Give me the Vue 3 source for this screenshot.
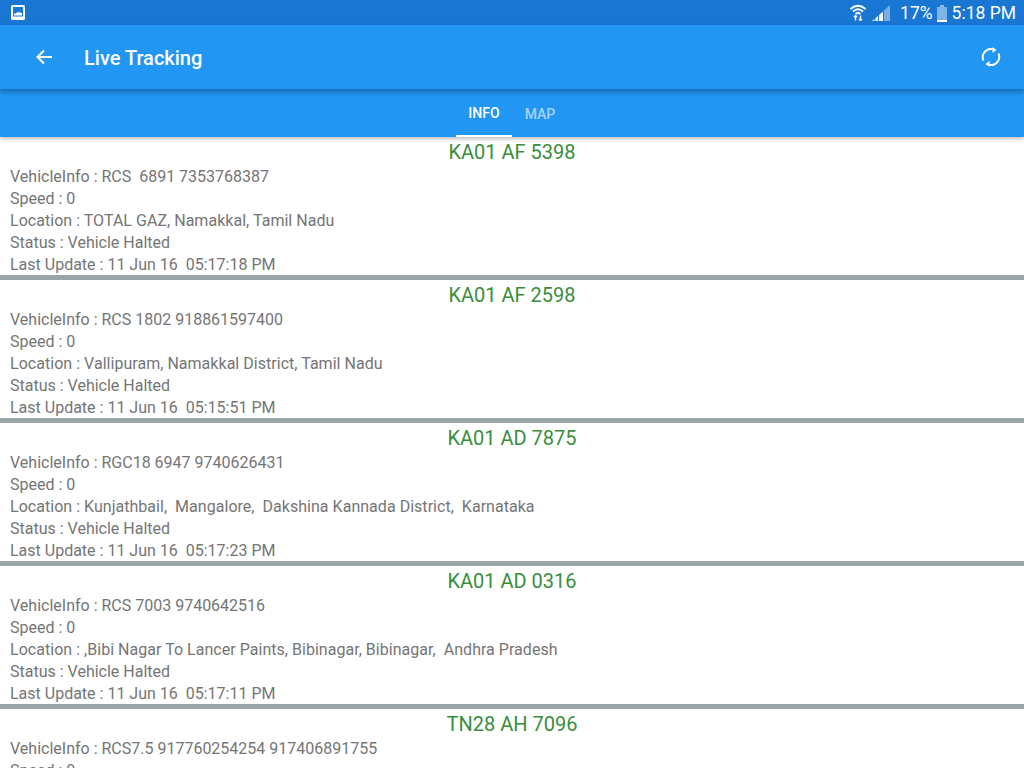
<script setup>
const vehicles = [
  { plate: 'KA01 AF 5398', info: 'RCS  6891 7353768387', location: 'TOTAL GAZ, Namakkal, Tamil Nadu', update: '11 Jun 16  05:17:18 PM' },
  { plate: 'KA01 AF 2598', info: 'RCS 1802 918861597400', location: 'Vallipuram, Namakkal District, Tamil Nadu', update: '11 Jun 16  05:15:51 PM' },
  { plate: 'KA01 AD 7875', info: 'RGC18 6947 9740626431', location: 'Kunjathbail,  Mangalore,  Dakshina Kannada District,  Karnataka', update: '11 Jun 16  05:17:23 PM' },
  { plate: 'KA01 AD 0316', info: 'RCS 7003 9740642516', location: ',Bibi Nagar To Lancer Paints, Bibinagar, Bibinagar,  Andhra Pradesh', update: '11 Jun 16  05:17:11 PM' },
  { plate: 'TN28 AH 7096', info: 'RCS7.5 917760254254 917406891755', location: '', update: '' }
]
</script>

<template>
  <div class="screen">
    <div class="status">
      <svg class="img-icon" width="14" height="15" viewBox="0 0 14 15">
        <rect x="0" y="0" width="14" height="15" rx="1.5" fill="#fff" />
        <rect x="2" y="2" width="10" height="9.5" fill="#1976d2" />
        <path d="M3 10.5 L3 8.5 L5 8.5 L6 7 L7 8 L8 6.5 L9 7.5 L11 8 L11 10.5 Z" fill="#fff" />
      </svg>
      <div class="status-right">
        <svg class="wifi" width="16" height="17" viewBox="0 0 16 17" fill="none" stroke="#fff" stroke-width="1.9">
          <path d="M0.5 5 Q8 -1.5 15.5 5" />
          <path d="M3 7.5 Q8 3 13 7.5" />
          <path d="M5.5 10 Q8 8 10.5 10" />
          <path d="M5.5 11.5 V16.5 M4 13 L5.5 11.5 L7 13 M10.5 16.5 V11.5 M9 15 L10.5 16.5 L12 15" stroke-width="1.4" />
        </svg>
        <svg class="signal" width="18" height="16" viewBox="0 0 18 16">
          <path d="M12 5.5 L18 0 L18 16 L12 16 Z" fill="#fff" fill-opacity="0.42" />
          <path d="M7 10 L11 6.5 L11 16 L7 16 Z" fill="#fff" fill-opacity="0.95" />
          <path d="M3.5 13 L6 11 L6 16 L3.5 16 Z" fill="#fff" />
          <path d="M0 16 L2.5 14 L2.5 16 Z" fill="#fff" />
        </svg>
        <span class="pct">17%</span>
        <svg class="battery" width="10" height="17" viewBox="0 0 10 17">
          <rect x="3" y="0" width="4" height="2" fill="#fff" fill-opacity="0.5" />
          <rect x="0" y="2" width="10" height="13" fill="#fff" fill-opacity="0.45" />
          <rect x="0" y="15" width="10" height="2" fill="#fff" />
        </svg>
        <span class="time">5:18 PM</span>
      </div>
    </div>

    <header class="appbar">
      <svg class="back" width="16" height="16" viewBox="0 0 16 16" fill="none" stroke="#fff" stroke-width="2">
        <path d="M16 8 H1.5 M8 1.5 L1.5 8 L8 14.5" />
      </svg>
      <h1 class="title">Live Tracking</h1>
      <svg class="refresh" width="20" height="20" viewBox="0 0 20 20" fill="none" stroke="#fff" stroke-width="2">
        <path d="M2.5 13.5 A8.2 8.2 0 0 1 12 2.2" />
        <path d="M17.5 6.5 A8.2 8.2 0 0 1 8 17.8" />
        <path d="M11.5 0 L15.5 3 L11.5 6 Z" fill="#fff" stroke="none" />
        <path d="M8.5 14 L4.5 17 L8.5 20 Z" fill="#fff" stroke="none" />
      </svg>
    </header>

    <nav class="tabs">
      <div class="tab active">INFO</div>
      <div class="tab">MAP</div>
    </nav>

    <main class="list">
      <section v-for="v in vehicles" :key="v.plate" class="card">
        <div class="plate">{{ v.plate }}</div>
        <div class="line">VehicleInfo : {{ v.info }}</div>
        <div class="line">Speed : 0</div>
        <template v-if="v.location">
          <div class="line loc">Location : {{ v.location }}</div>
          <div class="line">Status : Vehicle Halted</div>
          <div class="line">Last Update : {{ v.update }}</div>
        </template>
      </section>
    </main>
  </div>
</template>

<style scoped>
.screen {
  width: 1024px;
  height: 768px;
  overflow: hidden;
  background: #fff;
  font-family: Roboto, "Liberation Sans", sans-serif;
  display: flex;
  flex-direction: column;
}
.status {
  height: 25px;
  flex: none;
  background: #1976d2;
  color: #fff;
  display: flex;
  align-items: center;
  justify-content: space-between;
  padding: 0 8px 0 11px;
  box-sizing: border-box;
}
.status-right {
  display: flex;
  align-items: center;
}
.wifi { margin-right: 6px; }
.signal { margin-right: 10px; margin-top: 1px; }
.pct { font-size: 17.5px; margin-right: 4px; }
.battery { margin-right: 5px; margin-top: 1px; }
.time { font-size: 17.5px; }
.appbar {
  height: 64px;
  flex: none;
  background: #2196f3;
  display: flex;
  align-items: center;
  padding: 0 23px 1px 36px;
  box-sizing: border-box;
  box-shadow: 0 3px 5px rgba(0, 0, 0, 0.28);
  position: relative;
  z-index: 1;
}
.back { margin-right: 32px; }
.title {
  margin: 2px 0 0;
  flex: 1;
  font-size: 20px;
  font-weight: 500;
  color: #fff;
}
.tabs {
  height: 48px;
  flex: none;
  background: #2196f3;
  display: flex;
  justify-content: center;
  box-shadow: 0 2px 4px rgba(0, 0, 0, 0.25);
  position: relative;
}
.tab {
  width: 56px;
  box-sizing: border-box;
  display: flex;
  align-items: center;
  justify-content: center;
  padding-top: 2px;
  font-size: 14px;
  font-weight: 500;
  color: rgba(255, 255, 255, 0.6);
}
.tab.active {
  color: #fff;
  border-bottom: 2px solid #fff;
}
.list { flex: 1; overflow: hidden; }
.card {
  box-sizing: border-box;
  height: 143px;
  padding: 0 10px;
  border-bottom: 5px solid #9aa5a8;
  color: #757575;
  font-size: 16px;
}
.plate {
  height: 28px;
  line-height: 30px;
  text-align: center;
  font-size: 20px;
  color: #388e3c;
}
.line {
  height: 22px;
  line-height: 24px;
  white-space: pre;
}
.loc { letter-spacing: 0.03px; }
</style>
